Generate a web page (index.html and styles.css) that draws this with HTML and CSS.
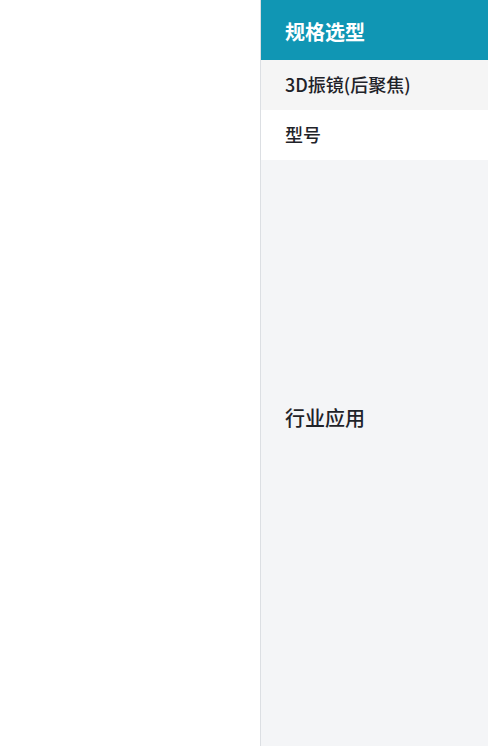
FILE: index.html
```html
<!DOCTYPE html>
<html lang="zh">
<head>
  <meta charset="UTF-8">
  <meta name="viewport" content="width=device-width, initial-scale=1.0">
  <title>规格选型</title>
  <link rel="stylesheet" href="styles.css">
</head>
<body>
  <div class="page">
    <div class="blank"></div>
    <aside class="panel">
      <div class="panel-head">规格选型</div>
      <div class="row row-gray">3D振镜(后聚焦)</div>
      <div class="row">型号</div>
      <div class="section">行业应用</div>
    </aside>
  </div>
</body>
</html>
```

FILE: styles.css
```css
html, body {
  margin: 0;
  height: 100%;
}
body {
  font-family: "Noto Sans CJK SC", "Noto Sans", sans-serif;
  color: #1f2329;
  background: #fff;
}
.page {
  display: flex;
  height: 100%;
}
.blank {
  width: 260px;
  flex-shrink: 0;
}
.panel {
  flex: 1;
  display: flex;
  flex-direction: column;
  border-left: 1px solid #dcdfe3;
}
.panel-head {
  height: 60px;
  box-sizing: border-box;
  display: flex;
  align-items: center;
  padding: 2px 0 0 24px;
  background: #1096b4;
  color: #fff;
  font-size: 20px;
  font-weight: 700;
}
.row {
  height: 50px;
  box-sizing: border-box;
  display: flex;
  align-items: center;
  padding: 0 0 3px 24px;
  font-size: 18px;
  font-weight: 500;
  background: #fff;
}
.row-gray {
  background: #f5f5f5;
}
.section {
  flex: 1;
  background: #f4f5f7;
  padding: 243px 0 0 24px;
  font-size: 20px;
  font-weight: 500;
}
```
